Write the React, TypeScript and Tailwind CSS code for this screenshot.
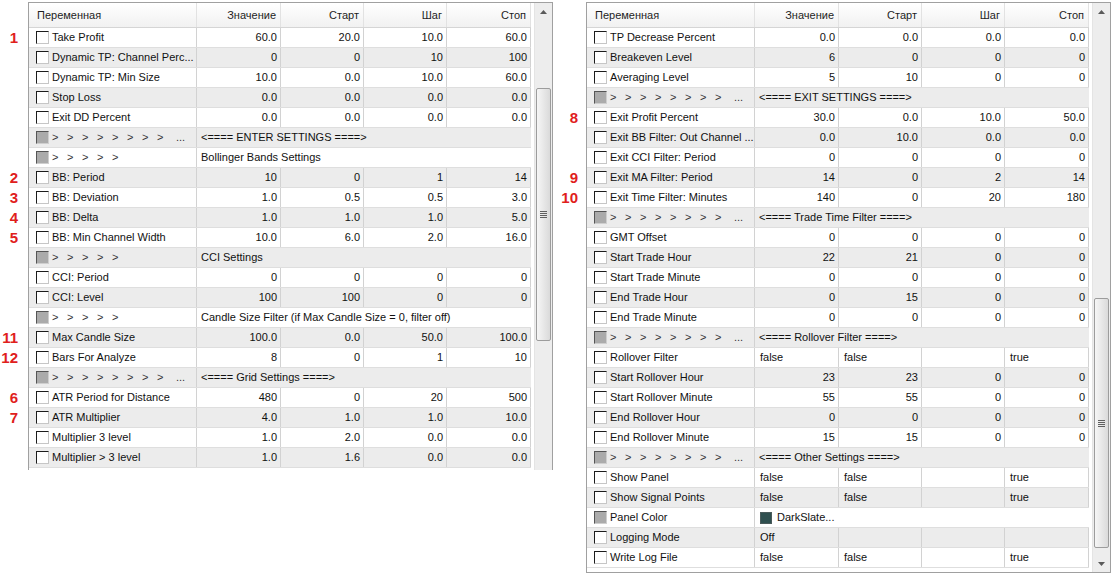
import React from 'react';

type Row = {
  name?: string;
  vals?: string[];
  sep?: string;
  arrows?: number;
  left?: boolean;
  swatch?: string;
  mark?: string;
};

const leftRows: Row[] = [
  { name: 'Take Profit', vals: ['60.0', '20.0', '10.0', '60.0'], mark: '1' },
  { name: 'Dynamic TP: Channel Perc...', vals: ['0', '0', '10', '100'] },
  { name: 'Dynamic TP: Min Size', vals: ['10.0', '0.0', '10.0', '60.0'] },
  { name: 'Stop Loss', vals: ['0.0', '0.0', '0.0', '0.0'] },
  { name: 'Exit DD Percent', vals: ['0.0', '0.0', '0.0', '0.0'] },
  { arrows: 8, sep: '<==== ENTER SETTINGS ====>' },
  { arrows: 5, sep: 'Bollinger Bands Settings' },
  { name: 'BB: Period', vals: ['10', '0', '1', '14'], mark: '2' },
  { name: 'BB: Deviation', vals: ['1.0', '0.5', '0.5', '3.0'], mark: '3' },
  { name: 'BB: Delta', vals: ['1.0', '1.0', '1.0', '5.0'], mark: '4' },
  { name: 'BB: Min Channel Width', vals: ['10.0', '6.0', '2.0', '16.0'], mark: '5' },
  { arrows: 5, sep: 'CCI Settings' },
  { name: 'CCI: Period', vals: ['0', '0', '0', '0'] },
  { name: 'CCI: Level', vals: ['100', '100', '0', '0'] },
  { arrows: 5, sep: 'Candle Size Filter (if Max Candle Size = 0, filter off)' },
  { name: 'Max Candle Size', vals: ['100.0', '0.0', '50.0', '100.0'], mark: '11' },
  { name: 'Bars For Analyze', vals: ['8', '0', '1', '10'], mark: '12' },
  { arrows: 8, sep: '<==== Grid Settings ====>' },
  { name: 'ATR Period for Distance', vals: ['480', '0', '20', '500'], mark: '6' },
  { name: 'ATR Multiplier', vals: ['4.0', '1.0', '1.0', '10.0'], mark: '7' },
  { name: 'Multiplier 3 level', vals: ['1.0', '2.0', '0.0', '0.0'] },
  { name: 'Multiplier > 3 level', vals: ['1.0', '1.6', '0.0', '0.0'] },
];

const rightRows: Row[] = [
  { name: 'TP Decrease Percent', vals: ['0.0', '0.0', '0.0', '0.0'] },
  { name: 'Breakeven Level', vals: ['6', '0', '0', '0'] },
  { name: 'Averaging Level', vals: ['5', '10', '0', '0'] },
  { arrows: 8, sep: '<==== EXIT SETTINGS ====>' },
  { name: 'Exit Profit Percent', vals: ['30.0', '0.0', '10.0', '50.0'], mark: '8' },
  { name: 'Exit BB Filter: Out Channel ...', vals: ['0.0', '10.0', '0.0', '0.0'] },
  { name: 'Exit CCI Filter: Period', vals: ['0', '0', '0', '0'] },
  { name: 'Exit MA Filter: Period', vals: ['14', '0', '2', '14'], mark: '9' },
  { name: 'Exit Time Filter: Minutes', vals: ['140', '0', '20', '180'], mark: '10' },
  { arrows: 8, sep: '<==== Trade Time Filter ====>' },
  { name: 'GMT Offset', vals: ['0', '0', '0', '0'] },
  { name: 'Start Trade Hour', vals: ['22', '21', '0', '0'] },
  { name: 'Start Trade Minute', vals: ['0', '0', '0', '0'] },
  { name: 'End Trade Hour', vals: ['0', '15', '0', '0'] },
  { name: 'End Trade Minute', vals: ['0', '0', '0', '0'] },
  { arrows: 8, sep: '<==== Rollover Filter ====>' },
  { name: 'Rollover Filter', vals: ['false', 'false', '', 'true'], left: true },
  { name: 'Start Rollover Hour', vals: ['23', '23', '0', '0'] },
  { name: 'Start Rollover Minute', vals: ['55', '55', '0', '0'] },
  { name: 'End Rollover Hour', vals: ['0', '0', '0', '0'] },
  { name: 'End Rollover Minute', vals: ['15', '15', '0', '0'] },
  { arrows: 8, sep: '<==== Other Settings ====>' },
  { name: 'Show Panel', vals: ['false', 'false', '', 'true'], left: true },
  { name: 'Show Signal Points', vals: ['false', 'false', '', 'true'], left: true },
  { name: 'Panel Color', swatch: 'DarkSlate...' },
  { name: 'Logging Mode', vals: ['Off', '', '', ''], left: true },
  { name: 'Write Log File', vals: ['false', 'false', '', 'true'], left: true },
];

const widths = ['w-[84px]', 'w-[83px]', 'w-[83px]', 'w-[84px]'];
const heads = ['Значение', 'Старт', 'Шаг', 'Стоп'];

const CheckBox = ({ gray }: { gray?: boolean }) => (
  <span
    className={
      'w-[13px] h-[13px] shrink-0 border-t border-l border-r border-b ' +
      (gray
        ? 'bg-[#ababab] border-t-[#555] border-l-[#555] border-r-[#cfcfcf] border-b-[#cfcfcf]'
        : 'bg-white border-t-[#1c1c1c] border-l-[#1c1c1c] border-r-[#c6c6c6] border-b-[#c6c6c6]')
    }
  />
);

const Arrows = ({ n }: { n: number }) => (
  <span className="flex text-[#333]">
    {Array.from({ length: n }).map((_, i) => (
      <span key={i} className="w-[15px]">&gt;</span>
    ))}
    {n === 8 && <span className="ml-[4px]">...</span>}
  </span>
);

const TableRow = ({ r, i }: { r: Row; i: number }) => {
  const bg = i % 2 === 0 ? 'bg-white' : 'bg-[#ececec]';
  return (
    <div className={`flex h-[20px] border-b border-[#dedede] ${bg}`}>
      <div className="w-[168px] flex items-center pl-[7px] border-r border-[#d2d2d2]">
        <CheckBox gray={!!r.sep || !!r.swatch} />
        <span className="ml-[3px] whitespace-nowrap">
          {r.sep ? <Arrows n={r.arrows ?? 5} /> : r.name}
        </span>
      </div>
      {r.sep && (
        <div className="w-[334px] flex items-center pl-[4px] whitespace-nowrap">{r.sep}</div>
      )}
      {r.swatch && (
        <div className="w-[334px] flex items-center pl-[5px]">
          <span className="w-[12px] h-[12px] bg-[#2f4f4f] border border-[#4a5a5a]" />
          <span className="ml-[5px]">{r.swatch}</span>
        </div>
      )}
      {r.vals &&
        r.vals.map((v, j) => (
          <div
            key={j}
            className={`${widths[j]} flex items-center border-r border-[#d2d2d2] ${
              r.left ? 'justify-start pl-[5px]' : 'justify-end pr-[3px]'
            }`}
          >
            {v}
          </div>
        ))}
    </div>
  );
};

const Arrow = ({ down }: { down?: boolean }) => (
  <div className="h-[17px] flex items-center justify-center">
    <svg width="7" height="4" viewBox="0 0 7 4">
      <path d={down ? 'M0 0 H7 L3.5 4 Z' : 'M0 4 H7 L3.5 0 Z'} fill="#5a5a5a" />
    </svg>
  </div>
);

const Thumb = ({ h }: { h: string }) => (
  <div
    className={`${h} mx-[1px] rounded-[2px] border border-[#9c9c9c] bg-linear-to-r from-[#f6f6f6] to-[#dadada] flex items-center justify-center`}
  >
    <div className="flex flex-col gap-[1px]">
      <span className="w-[7px] h-[1px] bg-[#5f5f5f]" />
      <span className="w-[7px] h-[1px] bg-[#5f5f5f]" />
      <span className="w-[7px] h-[1px] bg-[#5f5f5f]" />
      <span className="w-[7px] h-[1px] bg-[#5f5f5f]" />
    </div>
  </div>
);

const Panel = ({
  rows,
  right,
}: {
  rows: Row[];
  right?: boolean;
}) => (
  <div
    className={`w-[525px] mt-[2px] border-t border-l border-r border-[#a0a0a0] flex ${
      right ? 'h-[571px] border-b' : 'h-[468px]'
    }`}
  >
    <div className="w-[502px] flex flex-col">
      <div className="h-[25px] flex border-b border-[#d5d5d5] bg-linear-to-b from-white to-[#f1f1f1] text-[#1e1e1e]">
        <div className="w-[168px] flex items-center pl-[8px] border-r border-[#e2e2e2]">Переменная</div>
        {heads.map((h, j) => (
          <div key={j} className={`${widths[j]} flex items-center justify-end pr-[4px] border-r border-[#e2e2e2]`}>
            {h}
          </div>
        ))}
      </div>
      {rows.map((r, i) => (
        <TableRow key={i} r={r} i={i} />
      ))}
    </div>
    <div className="flex-1" />
    <div className="w-[18px] flex flex-col bg-[#ededed] border-l border-[#e4e4e4]">
      <Arrow />
      {right ? (
        <>
          <div className="h-[278px]" />
          <Thumb h="h-[250px]" />
          <div className="flex-1" />
          <Arrow down />
        </>
      ) : (
        <>
          <div className="h-[68px]" />
          <Thumb h="h-[253px]" />
          <div className="flex-1" />
        </>
      )}
    </div>
  </div>
);

const Marks = ({ rows, w, pr }: { rows: Row[]; w: string; pr: string }) => (
  <div className={`${w} pt-[28px] flex flex-col`}>
    {rows.map((r, i) => (
      <div key={i} className={`h-[20px] flex items-center justify-end ${pr} text-[15px] font-bold text-[#e0201c]`}>
        {r.mark ?? ''}
      </div>
    ))}
  </div>
);

export default function App() {
  return (
    <div className="w-[1112px] h-[574px] bg-white flex text-[11px] text-[#111] font-['Liberation_Sans',Arial,sans-serif] overflow-hidden">
      <Marks rows={leftRows} w="w-[28px]" pr="pr-[10px]" />
      <Panel rows={leftRows} />
      <Marks rows={rightRows} w="w-[33px]" pr="pr-[8px]" />
      <Panel rows={rightRows} right />
    </div>
  );
}
